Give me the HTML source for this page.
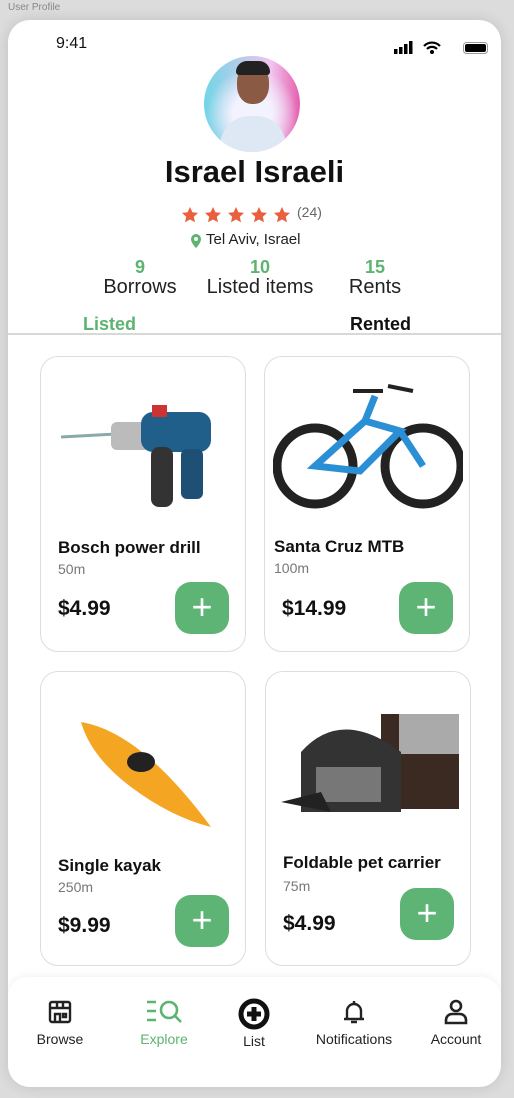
<!DOCTYPE html>
<html><head><meta charset="utf-8"><style>
*{margin:0;padding:0;box-sizing:border-box}
body{width:514px;height:1098px;background:#dcdcdc;font-family:"Liberation Sans",sans-serif;position:relative;overflow:hidden}
.t{position:absolute;color:#111;white-space:nowrap}
.phone{position:absolute;left:8px;top:20px;width:493px;height:1067px;background:#fff;border-radius:22px;overflow:hidden;box-shadow:0 0 14px rgba(0,0,0,.12)}
.card{position:absolute;width:206px;height:296px;border:1px solid #ddd;border-radius:18px;background:#fff}
.card .n{position:absolute;left:17px;top:181px;font-weight:bold;font-size:17px;color:#111}
.card .d{position:absolute;left:17px;top:204px;font-size:14px;color:#777}
.card .p{position:absolute;left:17px;top:240px;font-weight:bold;font-size:21px;color:#111}
.card .b{position:absolute;right:16px;top:225px;width:54px;height:52px;border-radius:16px;background:#5eb474;color:#fff;font-size:36px;line-height:50px;text-align:center;font-weight:300}
.nav{position:absolute;left:0;top:957px;width:493px;height:110px;background:#fff;border-radius:20px;box-shadow:0 -2px 8px rgba(0,0,0,.05)}
.nl{position:absolute;top:1011px;font-size:14px;color:#222;text-align:center;width:100px}
.g{color:#5db370}
</style></head><body>
<div class="t" style="left:8px;top:2px;font-size:10px;color:#888">User Profile</div>
<div class="phone">
<div class="t" style="left:48px;top:15px;font-size:16px">9:41</div>
<svg style="position:absolute;left:386px;top:20px" width="100" height="16"><rect x="0" y="9" width="3.5" height="5" fill="#000"/><rect x="5" y="7" width="3.5" height="7" fill="#000"/><rect x="10" y="4" width="3.5" height="10" fill="#000"/><rect x="15" y="1" width="3.5" height="13" fill="#000"/><path d="M30 6a11 11 0 0 1 16 0M33 9a7 7 0 0 1 10 0" stroke="#000" stroke-width="2.2" fill="none"/><circle cx="38" cy="12" r="2" fill="#000"/><rect x="69.5" y="2.5" width="24" height="11" rx="3" fill="none" stroke="#999"/><rect x="71" y="4" width="21" height="8" rx="2" fill="#000"/></svg>
<div style="position:absolute;left:196px;top:36px;width:96px;height:96px;border-radius:50%;overflow:hidden;background:radial-gradient(circle at 50% 60%,#f3f3ff 25%,transparent 60%),linear-gradient(90deg,#6fd6e6,#f1c4ee 70%,#e45fae)">
<div style="position:absolute;left:33px;top:8px;width:32px;height:40px;border-radius:45%;background:#8a5a45"></div>
<div style="position:absolute;left:32px;top:5px;width:34px;height:14px;border-radius:14px 14px 4px 4px;background:#222"></div>
<div style="position:absolute;left:16px;top:60px;width:66px;height:40px;border-radius:30px 30px 0 0;background:#dde8f4"></div>
</div>
<div class="t" style="left:0;width:493px;text-align:center;top:134px;font-size:31px;font-weight:bold">Israel Israeli</div>
<svg style="position:absolute;left:174px;top:187px" width="114" height="17"><g fill="#e9603f"><path id="s" d="M8 0l2.4 5.3 5.6.6-4.2 3.8 1.2 5.6L8 12.5 3 15.3l1.2-5.6L0 5.9l5.6-.6z"/><use href="#s" x="23"/><use href="#s" x="46"/><use href="#s" x="69"/><use href="#s" x="92"/></g></svg>
<div class="t" style="left:289px;top:184px;font-size:14px;color:#666">(24)</div>
<svg style="position:absolute;left:182px;top:214px" width="12" height="14"><path d="M6 0a5 5 0 0 0-5 5c0 4 5 9 5 9s5-5 5-9a5 5 0 0 0-5-5z" fill="#5db370"/><circle cx="6" cy="5" r="2" fill="#fff"/></svg>
<div class="t" style="left:198px;top:211px;font-size:15px;color:#222">Tel Aviv, Israel</div>
<div class="t g" style="left:82px;width:100px;text-align:center;top:237px;font-size:18px;font-weight:bold">9</div>
<div class="t" style="left:82px;width:100px;text-align:center;top:256px;font-size:20px;color:#222">Borrows</div>
<div class="t g" style="left:192px;width:120px;text-align:center;top:237px;font-size:18px;font-weight:bold">10</div>
<div class="t" style="left:192px;width:120px;text-align:center;top:256px;font-size:20px;color:#222">Listed items</div>
<div class="t g" style="left:327px;width:80px;text-align:center;top:237px;font-size:18px;font-weight:bold">15</div>
<div class="t" style="left:327px;width:80px;text-align:center;top:256px;font-size:20px;color:#222">Rents</div>
<div class="t g" style="left:75px;top:294px;font-size:18px;font-weight:bold">Listed</div>
<div class="t" style="left:342px;top:294px;font-size:18px;font-weight:bold">Rented</div>
<div style="position:absolute;left:0;top:313px;width:493px;height:2px;background:#d8d8d8"></div>

<div class="card" style="left:32px;top:336px">
<svg style="position:absolute;left:15px;top:30px" width="180" height="130"><path d="M5 50l55-3" stroke="#8aa" stroke-width="3"/><rect x="55" y="35" width="40" height="28" rx="6" fill="#bbb"/><rect x="85" y="25" width="70" height="40" rx="12" fill="#1f5f8a"/><rect x="95" y="60" width="22" height="60" rx="8" fill="#333"/><rect x="125" y="62" width="22" height="50" rx="6" fill="#1e4f75"/><rect x="96" y="18" width="15" height="12" fill="#c33"/></svg>
<div class="n">Bosch power drill</div><div class="d">50m</div><div class="p">$4.99</div><div class="b">+</div></div>
<div class="card" style="left:256px;top:336px">
<svg style="position:absolute;left:8px;top:14px" width="190" height="150"><g fill="none" stroke="#222" stroke-width="9"><circle cx="42" cy="95" r="38"/><circle cx="150" cy="95" r="38"/></g><g fill="none" stroke="#2b8fd6" stroke-width="7"><path d="M42 95l50-45 35 10-40 40zM92 50l10-25M127 60l23 35"/></g><path d="M80 20h30M115 15l25 5" stroke="#222" stroke-width="4"/></svg>
<div class="n" style="top:180px;left:9px">Santa Cruz MTB</div><div class="d" style="top:203px;left:9px">100m</div><div class="p">$14.99</div><div class="b">+</div></div>
<div class="card" style="left:32px;top:651px;height:295px">
<svg style="position:absolute;left:30px;top:30px" width="150" height="130"><path d="M10 20q60 10 130 105q-40-10-80-40q-40-30-50-65z" fill="#f4a521"/><ellipse cx="70" cy="60" rx="14" ry="10" fill="#222"/></svg>
<div class="n" style="top:184px">Single kayak</div><div class="d" style="top:207px">250m</div><div class="p" style="top:242px">$9.99</div><div class="b" style="top:223px">+</div></div>
<div class="card" style="left:257px;top:651px;height:295px">
<svg style="position:absolute;left:15px;top:20px" width="185" height="145"><rect x="100" y="22" width="78" height="95" fill="#3a2a22"/><rect x="118" y="22" width="60" height="40" fill="#aaa"/><path d="M20 60q40-45 100 0v60h-100z" fill="#333"/><path d="M35 75h65v35h-65z" fill="#777"/><path d="M0 110l40-10 10 20z" fill="#222"/></svg>
<div class="n">Foldable pet carrier</div><div class="d" style="top:206px">75m</div><div class="p" style="top:240px">$4.99</div><div class="b" style="top:216px">+</div></div>

<div class="nav"></div>
<svg style="position:absolute;left:40px;top:980px" width="24" height="24" fill="none" stroke="#222" stroke-width="2.4"><rect x="2" y="2" width="20" height="20" rx="2"/><path d="M2 8h20M9 2v6M15 2v6M7 22v-8h5v8M15 14h3v3h-3z"/></svg>
<svg style="position:absolute;left:139px;top:979px" width="36" height="26" fill="none" stroke="#5db370" stroke-width="2.6"><path d="M0 3h9M0 12h9M0 21h9"/><circle cx="22" cy="11" r="8"/><path d="M28 17l6 6"/></svg>
<svg style="position:absolute;left:230px;top:978px" width="32" height="32"><circle cx="16" cy="16" r="13" fill="none" stroke="#111" stroke-width="5"/><path d="M16 9v14M9 16h14" stroke="#111" stroke-width="5"/></svg>
<svg style="position:absolute;left:334px;top:979px" width="24" height="26" fill="none" stroke="#222" stroke-width="2.4"><path d="M12 2v2M5 20V12a7 7 0 0 1 14 0v8M2 20h20M9 23h6"/></svg>
<svg style="position:absolute;left:436px;top:979px" width="24" height="26" fill="none" stroke="#222" stroke-width="2.6"><circle cx="12" cy="7" r="5"/><path d="M2 24v-3a6 6 0 0 1 6-6h8a6 6 0 0 1 6 6v3z"/></svg>
<div class="nl" style="left:2px">Browse</div>
<div class="nl g" style="left:106px">Explore</div>
<div class="nl" style="left:196px;top:1013px">List</div>
<div class="nl" style="left:296px;width:100px">Notifications</div>
<div class="nl" style="left:398px">Account</div>
</div>
</body></html>
